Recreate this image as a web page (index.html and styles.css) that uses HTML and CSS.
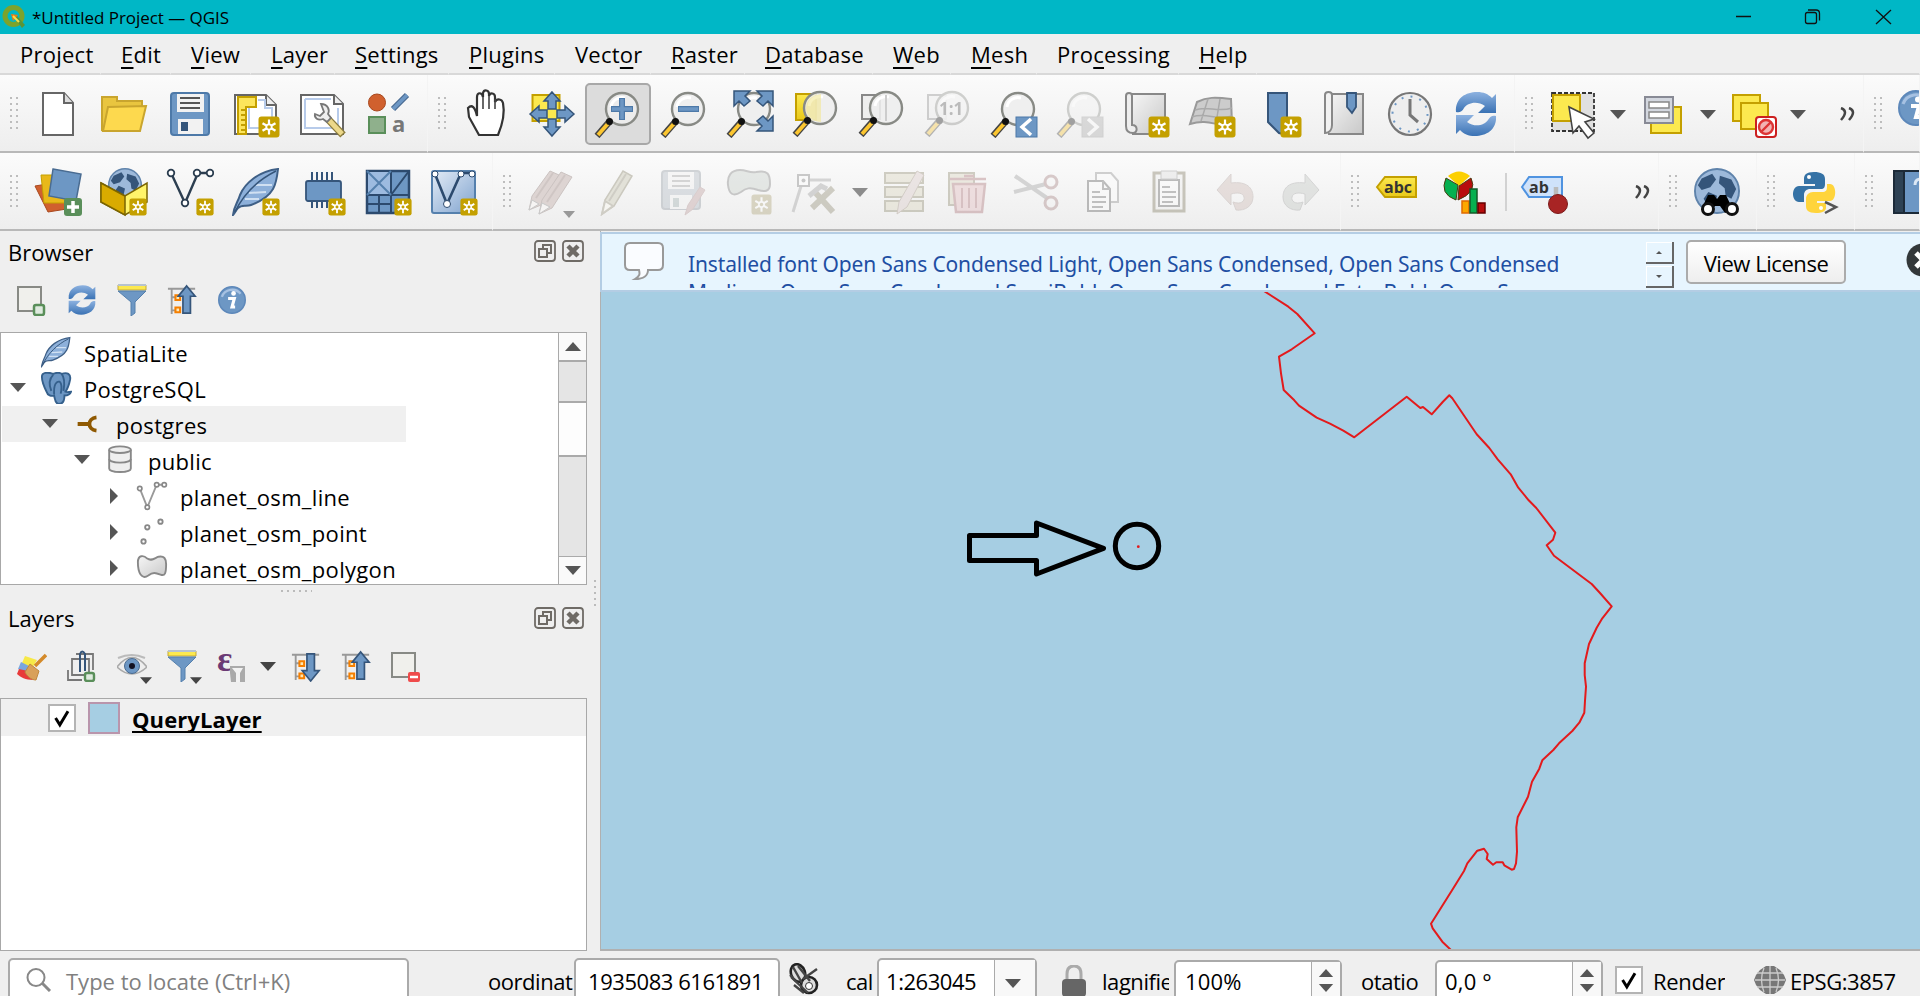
FILE: index.html
```html
<!DOCTYPE html>
<html lang="en">
<head>
<meta charset="utf-8">
<title>*Untitled Project — QGIS</title>
<link rel="stylesheet" href="styles.css">
</head>
<body>
<svg class="defs" width="0" height="0">
<defs>
<linearGradient id="gold" x1="0" y1="0" x2="0" y2="1"><stop offset="0" stop-color="#fce94f"/><stop offset="1" stop-color="#e8c81a"/></linearGradient>
<linearGradient id="sky" x1="0" y1="0" x2="1" y2="1"><stop offset="0" stop-color="#e4ecf6"/><stop offset="1" stop-color="#7fa3cf"/></linearGradient>
<linearGradient id="grey" x1="0" y1="0" x2="1" y2="1"><stop offset="0" stop-color="#f6f6f6"/><stop offset="1" stop-color="#c8c8c8"/></linearGradient>
<linearGradient id="ref" x1="0" y1="0" x2="0" y2="1"><stop offset="0" stop-color="#8db2e0"/><stop offset="1" stop-color="#3a72b4"/></linearGradient>
<symbol id="star" viewBox="0 0 22 22"><rect x=".5" y=".5" width="21" height="21" rx="3" fill="#c4a000"/><path d="M11 3.500v15M4.500 7.200l13 7.600M17.500 7.200l-13 7.600" stroke="#fff" stroke-width="2.200"/><circle cx="11" cy="11" r="3.600" fill="#fff"/><circle cx="11" cy="11" r="1.800" fill="#c4a000"/></symbol>
<symbol id="lens" viewBox="0 0 48 48"><path d="M16 31L3 46" stroke="#444" stroke-width="6.500"/><path d="M14.500 33L4 45" stroke="#fcc630" stroke-width="3.800"/><circle cx="28" cy="19" r="16" fill="#eee" fill-opacity=".88" stroke="#888a85" stroke-width="2.400"/><path d="M17 17a11 11 0 0 1 14-9" fill="none" stroke="#fff" stroke-width="3"/><circle cx="15.500" cy="31.500" r="3.500" fill="#111"/></symbol>
<symbol id="refresh" viewBox="0 0 48 48"><path d="M4 22C3 8 14 2 25 2c7 0 11 2 15 6l4-4v19H26l7-7c-8-6-18-3-21 2-2 4-5 5-8 4z" fill="url(#ref)"/><path d="M44 26c1 14-10 20-21 20-7 0-11-2-15-6l-4 4V25h18l-7 7c8 6 18 3 21-2 2-4 5-5 8-4z" fill="url(#ref)"/></symbol>
<symbol id="feather" viewBox="0 0 48 48"><path d="M1 47c1-9 5-13 7-20C13 15 27 3 46 1c-1 9-2 15-5 20-4 7-14 13-22 16-5 2-9-1-13 3-2 2-3 5-5 7z" fill="#8db0da" stroke="#3e5f86" stroke-width="2"/><path d="M17 25l17-1M24 17l16 0M13 31l14 0" fill="none" stroke="#d0e0f2" stroke-width="2"/><path d="M3 44C12 25 26 12 44 3" fill="none" stroke="#35557a" stroke-width="1.500"/></symbol>
<symbol id="vline" viewBox="0 0 48 48"><path d="M6 8l13 28L32 6h11" fill="none" stroke="currentColor" stroke-width="2.400"/><g fill="#fff" stroke="currentColor" stroke-width="1.800"><circle cx="5" cy="6" r="3.300"/><circle cx="19" cy="36" r="3.300"/><circle cx="31" cy="6" r="3.300"/><circle cx="44" cy="6" r="3.300"/></g></symbol>
<symbol id="pencil" viewBox="0 0 48 48"><path d="M9 46l3-14L30 3l9 5-18 30z" fill="#e2e1d8" stroke="#cbc9bf" stroke-width="1.500"/><path d="M16 33L33 6M9 46l3-13 8 5z" fill="#f6f5f1" stroke="#cfcdc5" stroke-width="2"/></symbol>
<symbol id="funnel" viewBox="0 0 30 32"><path d="M1 1h28v5H1z" fill="#fce94f" stroke="#c4a93a" stroke-width="1"/><path d="M1 1h28" stroke="#b7c3cf" stroke-width="2"/><path d="M1 7h28L18 18v11l-4 3V18z" fill="#6d97c4" stroke="#5580ad"/></symbol>
<symbol id="info" viewBox="0 0 36 36"><circle cx="18" cy="18" r="17" fill="#6d97c4" stroke="#5d88ba" stroke-width="2"/><path d="M5 14a14 14 0 0 1 24-4" fill="none" stroke="#a6c1e2" stroke-width="3"/><circle cx="20" cy="9.500" r="3" fill="#fff"/><path d="M13 16h8l-3 11h4" fill="none" stroke="#fff" stroke-width="4"/></symbol>
<symbol id="treebase" viewBox="0 0 32 34"><path d="M1 5h29M5 5v27M5 14h6M5 28h6" fill="none" stroke="#999" stroke-width="2"/><path d="M9 12h5v5H9zM9 25h5v5H9z" fill="#fce9b8" stroke="#f57f00" stroke-width="2.200"/></symbol>
<symbol id="up" viewBox="0 0 32 34"><use href="#treebase"/><path d="M21 2l9 11h-5v18h-8V13h-5z" fill="#6d97c4" stroke="#35557a" stroke-width="1.800"/></symbol>
<symbol id="down" viewBox="0 0 32 34"><use href="#treebase"/><path d="M21 33l9-11h-5V4h-8v18h-5z" fill="#6d97c4" stroke="#35557a" stroke-width="1.800"/></symbol>
<symbol id="float" viewBox="0 0 22 22"><rect x="1" y="1" width="20" height="20" rx="3" fill="none" stroke="#6f6b66" stroke-width="1.800"/><path d="M5 9h8v8H5zM9 9V5h8v8h-4" fill="none" stroke="#6f6b66" stroke-width="2"/></symbol>
<symbol id="close" viewBox="0 0 22 22"><rect x="1" y="1" width="20" height="20" rx="3" fill="none" stroke="#6f6b66" stroke-width="1.800"/><path d="M6 6l10 10M16 6L6 16" stroke="#6f6b66" stroke-width="4.500"/></symbol>
<symbol id="caret" viewBox="0 0 16 9"><path d="M0 0h16L8 9z" fill="currentColor"/></symbol>
<symbol id="globe" viewBox="0 0 48 48"><circle cx="24" cy="24" r="23" fill="#9db9da" stroke="#5f83ab" stroke-width="2"/><path d="M8 11l11-5 4 6-6 8-9 3-4-5zM27 8l12 4 5 10-5 10-6-3-1-8-6-5zM15 25l9 4-2 9-6 4-6-10z" fill="#35557a"/></symbol>
</defs>
</svg>
<div class="window">
  <header class="titlebar">
    <svg class="applogo" viewBox="0 0 24 24"><circle cx="11.500" cy="11" r="8.500" fill="none" stroke="#7ca32c" stroke-width="5"/><path d="M12 12l3-1 8 9-3 3z" fill="#5a9437"/><path d="M9 9l7 1-5 6z" fill="#ee7913"/><path d="M11 11l6 6" stroke="#f6e04b" stroke-width="2"/></svg>
    <span class="apptitle">*Untitled Project — QGIS</span>
    <svg class="winbtns" width="200" height="34" viewBox="1720 0 200 34" fill="none" stroke="#111" stroke-width="1.300"><path d="M1736 16.500h15M1876 10l15 14M1891 10l-15 14"/><rect x="1805.500" y="12.500" width="11" height="11" rx="2"/><path d="M1808 10h8q3.500 0 3.500 3.500v7"/></svg>
  </header>
  <nav class="menubar">
    <span>Project</span><span><u>E</u>dit</span><span><u>V</u>iew</span><span><u>L</u>ayer</span><span><u>S</u>ettings</span><span><u>P</u>lugins</span><span>Vect<u>o</u>r</span><span><u>R</u>aster</span><span><u>D</u>atabase</span><span><u>W</u>eb</span><span><u>M</u>esh</span><span>Pro<u>c</u>essing</span><span><u>H</u>elp</span><span></span>
  </nav>
  <div class="toolbars">
    <div class="row">
      <section class="group g1a"><i class="grip"></i>
        <b class="tool"><svg class="ic"><path d="M9 3h21l9 10v32H9z" fill="#fff" stroke="#666" stroke-width="2"/><path d="M30 3v10h9" fill="#ddd" stroke="#666" stroke-width="2"/></svg></b>
        <b class="tool"><svg class="ic"><path d="M2 41V7h15v4h25v10" fill="#e9c53f" stroke="#c9a52e" stroke-width="2"/><path d="M3 41L8 17l38-1-6 25z" fill="#fdd94e" stroke="#c9a52e" stroke-width="2"/></svg></b>
        <b class="tool"><svg class="ic"><rect x="5" y="3" width="38" height="42" rx="3" fill="#6d97c4" stroke="#4d79a8" stroke-width="2"/><path d="M11 4h27v18H11zM12 29h25v15H12z" fill="#f2f2f2"/><path d="M14 8h20M14 13h20M14 18h20" stroke="#555" stroke-width="2"/><path d="M15 32h7v9h-7z" fill="#35557a"/></svg></b>
        <b class="tool"><svg class="ic"><path d="M3 5h31l10 10v29H3z" fill="#fff" stroke="#666" stroke-width="2"/><path d="M34 5v10h10" fill="#eee" stroke="#666" stroke-width="2"/><path d="M26 10h7v8h7v20H17V18" fill="none" stroke="#b7cbea" stroke-width="2"/><path d="M6 7h18v10H14v27H6z" fill="#fce55c" stroke="#c4a000" stroke-width="2"/><path d="M9 20h6M9 25h6M9 30h6M9 35h6M9 40h6" stroke="#c4a000" stroke-width="2"/><use href="#star" x="26" y="26" width="22" height="22"/></svg></b>
        <b class="tool"><svg class="ic"><path d="M3 5h33l9 9v30H3z" fill="#fff" stroke="#666" stroke-width="2"/><path d="M36 5v9h9" fill="#eee" stroke="#666" stroke-width="2"/><path d="M7 9h26M7 9v29h33V18" fill="none" stroke="#b7cbea" stroke-width="2"/><path d="M29 28L45 45" stroke="#8a7a3a" stroke-width="7.500"/><path d="M29 28L44 44" stroke="#ecd88a" stroke-width="5"/><path d="M17 24l5 2 4-4-3-8c7 0 9 6 7 10l3 4-4 4-4-3c-5 2-9-1-8-5z" fill="#eee" stroke="#777" stroke-width="1.800"/></svg></b>
        <b class="tool"><svg class="ic"><circle cx="13" cy="12.500" r="8.500" fill="#d0602e" stroke="#a8481e"/><path d="M29 19L43 5" stroke="#4a6c92" stroke-width="6"/><path d="M29 19L43 5" stroke="#6d97c4" stroke-width="3.500"/><rect x="5" y="27" width="16" height="16" fill="#8fb08c" stroke="#5a8f5a" stroke-width="2"/><text x="28" y="42" class="glyph-a">a</text></svg></b>
      </section>
      <section class="group g1b"><i class="grip"></i>
        <b class="tool"><svg class="ic"><path d="M16 45L6 27 5 18c4-4 7-1 9 8V7c0-5 5-5 6 0V3c1-4 6-3 6 1v2c1-4 6-3 6 1v5c2-4 7-3 8 1 2 10 0 20-5 32z" fill="#fff" stroke="#333" stroke-width="2.200" transform="translate(1 0)"/><path d="M21 7v12M27 6v13M33 9v10" stroke="#444" stroke-width="1.600"/></svg></b>
        <b class="tool"><svg class="ic"><rect x="4.500" y="5" width="27" height="26" fill="#fce94f" stroke="#c4a000" stroke-width="2"/><path d="M24 2l8 9h-4v8h-8v-8h-4zM24 46l8-9h-4v-8h-8v8h-4zM2 24l9-8v4h8v8h-8v4zM46 24l-9-8v4h-8v8h8v4z" fill="#6d97c4" stroke="#35557a" stroke-width="1.500"/></svg></b>
        <b class="tool on"><svg class="ic"><use href="#lens"/><path d="M28 8v22M17 19h22" stroke="#4d79a8" stroke-width="6"/><path d="M28 9v20M18 19h20" stroke="#6d97c4" stroke-width="3.500"/></svg></b>
        <b class="tool"><svg class="ic"><use href="#lens"/><path d="M18 19h21" stroke="#4d79a8" stroke-width="6"/><path d="M19 19h19" stroke="#6d97c4" stroke-width="3.500"/></svg></b>
        <b class="tool"><svg class="ic"><use href="#lens"/><path d="M8 1h16l-5 5 5 5-6 5-5-5-5 5zM47 1H31l5 5-5 5 6 5 5-5 5 5zM47 41H31l5-5-5-5 6-5 5 5 5-5z" fill="#6d97c4" stroke="#35557a" stroke-width="1.500"/></svg></b>
        <b class="tool"><svg class="ic"><rect x="4" y="4" width="20" height="26" fill="url(#gold)" stroke="#c4a000" stroke-width="2"/><use href="#lens" y="-1"/><path d="M29 4v28a15 15 0 0 1-15-14Q15 6 29 4z" fill="#f3e58a" opacity=".55"/></svg></b>
        <b class="tool"><svg class="ic"><rect x="4" y="5" width="18" height="24" fill="#eee" stroke="#888" stroke-width="2"/><use href="#lens" y="-1"/><path d="M28 5v26" stroke="#ccc" stroke-width="2"/></svg></b>
        <b class="tool off"><svg class="ic"><rect x="4" y="5" width="18" height="24" fill="#eee" stroke="#888" stroke-width="2"/><use href="#lens" y="-1"/><text x="15" y="25" class="glyph-11">1:1</text></svg></b>
        <b class="tool"><svg class="ic"><use href="#lens"/><rect x="26" y="27" width="21" height="20" fill="#6d97c4" stroke="#4d79a8"/><path d="M41 29l-9 8 9 8" fill="none" stroke="#fff" stroke-width="3.500"/></svg></b>
        <b class="tool off"><svg class="ic"><use href="#lens"/><rect x="26" y="27" width="21" height="20" fill="#aaa" stroke="#999"/><path d="M32 29l9 8-9 8" fill="none" stroke="#fff" stroke-width="3.500"/></svg></b>
        <b class="tool"><svg class="ic"><path d="M9 4h34v40H10" fill="url(#grey)" stroke="#888" stroke-width="2"/><path d="M4 6c0-4 6-4 6 0v29c6 0 6 8 1 8-5 0-7-2-7-7z" fill="#eee" stroke="#888" stroke-width="2"/><use href="#star" x="26" y="26" width="22" height="22"/></svg></b>
        <b class="tool"><svg class="ic"><path d="M9 12c10-5 18-5 34-3l1 25c-14 4-22-6-42 0z" fill="#ccc" stroke="#999" stroke-width="2"/><path d="M7 20c12-5 22 3 37-2M4 27c14-5 25 4 40-1M20 9l-7 22M32 9l-4 24" stroke="#aaa" stroke-width="1.500" fill="none"/><use href="#star" x="26" y="26" width="22" height="22"/></svg></b>
        <b class="tool"><svg class="ic"><path d="M14 3h19v42L25 43 14 32z" fill="#6d97c4" stroke="#35557a" stroke-width="2"/><use href="#star" x="26" y="26" width="22" height="22"/></svg></b>
        <b class="tool"><svg class="ic"><path d="M8 4h35v40H8" fill="url(#grey)" stroke="#888" stroke-width="2"/><path d="M5 5c0-4 7-4 7 0v30c0 4-2 8-7 8z" fill="#f2f2f2" stroke="#888" stroke-width="2"/><path d="M27 3h9v14l-4 6-5-6z" fill="#6d97c4" stroke="#35557a" stroke-width="1.800"/></svg></b>
        <b class="tool"><svg class="ic"><circle cx="24" cy="24" r="21" fill="#eee" stroke="#777" stroke-width="2.200"/><circle cx="24" cy="24" r="17.500" fill="none" stroke="#6d97c4" stroke-width="2" stroke-dasharray="2 7.160"/><path d="M24 9v16l8 7" fill="none" stroke="#777" stroke-width="3"/></svg></b>
        <b class="tool"><svg class="ic"><use href="#refresh"/></svg></b>
      </section>
      <section class="group g1c"><i class="grip"></i>
        <b class="tool"><svg class="ic"><rect x="3" y="3" width="42" height="38" fill="#e0e0e0" stroke="#333" stroke-width="1.800" stroke-dasharray="4 2"/><rect x="4" y="5" width="27" height="26" fill="#fce94f" stroke="#c4a000" stroke-width="2"/><path d="M20 17l4 26 6-7 9 12 6-5-9-11 9-3z" fill="#fff" stroke="#444" stroke-width="1.600"/></svg></b><b class="drop"><svg><use href="#caret"/></svg></b>
        <b class="tool"><svg class="ic"><rect x="12" y="17" width="30" height="26" fill="#fce94f" stroke="#c4a000" stroke-width="2"/><rect x="6" y="7" width="28" height="26" fill="#d3d7df" stroke="#888a95" stroke-width="2"/><path d="M10 12h20v6H10zM10 22h20v6H10z" fill="#fff" stroke="#888" stroke-width="1.500"/></svg></b><b class="drop"><svg><use href="#caret"/></svg></b>
        <b class="tool"><svg class="ic"><g fill="#fce94f" stroke="#c4a000" stroke-width="2"><rect x="4" y="5" width="27" height="26"/><rect x="12" y="13" width="27" height="26"/></g><rect x="27" y="27" width="20" height="20" rx="3" fill="#fff" stroke="#cc2020" stroke-width="2"/><circle cx="37" cy="37" r="7" fill="#f2b3b3" stroke="#dd3434" stroke-width="2.400"/><path d="M32 42l10-10" stroke="#dd3434" stroke-width="2.400"/></svg></b><b class="drop"><svg><use href="#caret"/></svg></b>
        <svg class="more" viewBox="0 0 16 14"><path d="M1 1q8 3 0 12M9 1q8 3 0 12"/></svg>
      </section>
      <section class="group g1d"><i class="grip"></i><svg class="infobig"><use href="#info"/></svg></section>
    </div>
    <div class="row row2">
      <section class="group g2a"><i class="grip"></i>
        <b class="tool"><svg class="ic"><path d="M1 18l30-5 8 27-25 4z" fill="#d0602e" stroke="#a8481e"/><path d="M7 7l27 0 1 28-25 0z" fill="#e8b81a" stroke="#c4a000"/><path d="M19 1l28 5-5 27-27-5z" fill="#6d97c4" stroke="#4a6c92" stroke-width="1.500"/><rect x="30" y="30" width="18" height="18" rx="3" fill="#5a8f5a"/><path d="M39 33v12M33 39h12" stroke="#fff" stroke-width="3.500"/></svg></b>
        <b class="tool"><svg class="ic"><use href="#globe" x="8" y="0" width="34" height="34"/><path d="M1 15l24 13 22-13v19L25 47 1 34z" fill="#fff46a" stroke="#7a6400" stroke-width="1.500"/><path d="M1 15l24 13v19L1 34z" fill="#d9ab00" stroke="#7a6400" stroke-width="1.500"/><use href="#star" x="29" y="30" width="18" height="18"/></svg></b>
        <b class="tool"><svg class="ic vdark"><use href="#vline" y="-1"/><use href="#star" x="30" y="30" width="18" height="18"/></svg></b>
        <b class="tool"><svg class="ic"><use href="#feather"/><use href="#star" x="30" y="30" width="18" height="18"/></svg></b>
        <b class="tool"><svg class="ic"><path d="M14 4v36M19 4v36M24 4v36M29 4v36M34 4v36" stroke="#35557a" stroke-width="2"/><rect x="8" y="13" width="35" height="20" rx="2" fill="#6d97c4" stroke="#35557a" stroke-width="1.800"/><use href="#star" x="30" y="30" width="18" height="18"/></svg></b>
        <b class="tool"><svg class="ic"><rect x="3" y="3" width="42" height="42" fill="#6d97c4" stroke="#2c4a6e" stroke-width="2.500"/><path d="M4 4h22v22H4z" fill="#9dbbe0"/><path d="M3 27h42M27 3v24M27 27L45 3M15 27v18M27 27v18M3 36h24" fill="none" stroke="#2c4a6e" stroke-width="2"/><path d="M3 3l24 24M27 3L3 27" stroke="#5580ad" stroke-width="2"/><use href="#star" x="30" y="30" width="18" height="18"/></svg></b>
        <b class="tool"><svg class="ic vdark"><rect x="2" y="3" width="43" height="42" rx="2" fill="url(#sky)" stroke="#5580ad" stroke-width="2"/><path d="M5 6l12 30L31 5h13" fill="none" stroke="#2c4a6e" stroke-width="2.600"/><circle cx="5" cy="6" r="3" fill="#fff" stroke="#2c4a6e"/><circle cx="17" cy="36" r="3.500" fill="#fff" stroke="#2c4a6e"/><circle cx="31" cy="6" r="3" fill="#fff" stroke="#2c4a6e"/><circle cx="42" cy="6" r="3" fill="#fff" stroke="#2c4a6e"/><use href="#star" x="30" y="30" width="18" height="18"/></svg></b>
      </section>
      <section class="group g2b"><i class="grip"></i>
        <b class="tool"><svg class="ic"><g fill="#ddd4d2" stroke="#cbc3c1"><path d="M2 42l3-14L23 3l9 4-18 30z"/><path d="M12 46l3-14L34 4l11 5-20 31z"/></g><path d="M2 42l3-10 7 4zM12 46l3-11 8 4z" fill="#f6f4f3" stroke="#c8c8c8"/><path d="M9 30L26 5M20 34L38 7" stroke="#cfc6c4" stroke-width="2"/><path d="M36 43h12l-6 7z" fill="#999"/></svg></b>
        <b class="tool"><svg class="ic"><use href="#pencil"/></svg></b>
        <b class="tool off"><svg class="ic"><rect x="3" y="3" width="38" height="38" rx="3" fill="#aab4be" stroke="#8a939c" stroke-width="2"/><path d="M9 4h26v17H9zM11 27h22v14H11z" fill="#f2f2f2"/><path d="M13 8h18M13 13h18M13 18h18" stroke="#999" stroke-width="2"/><path d="M14 30h6v9h-6z" fill="#9aa"/><path d="M26 47l3-10 12-18 5 3-12 19z" fill="#b99" stroke="#a88"/></svg></b>
        <b class="tool off"><svg class="ic"><path d="M3 17C2 8 6 2 15 2c7 0 9 3 16 2 12-2 14 2 14 12 0 8-6 8-12 6-8-3-12-2-17 2C8 29 4 26 3 17z" fill="#c4ccc6" stroke="#777" stroke-width="2"/><g class="fade"><use href="#star" x="26" y="26" width="21" height="21"/></g></svg></b>
        <b class="tool off"><svg class="ic"><path d="M11 15L2 44M18 12h22" stroke="#999" stroke-width="3"/><rect x="7" y="7" width="11" height="11" fill="#fff" stroke="#777" stroke-width="2"/><circle cx="12.500" cy="12.500" r="2" fill="#777"/><path d="M21 40l21-20M22 22l20 22" stroke="#8a856c" stroke-width="6"/><path d="M18 28l12-10 6 3" fill="none" stroke="#999" stroke-width="5"/></svg></b><b class="drop faint"><svg><use href="#caret"/></svg></b>
        <b class="tool off"><svg class="ic"><path d="M4 5h38v10H4zM4 19h38v10H4zM4 33h38v10H4z" fill="#d7d2b8" stroke="#888366" stroke-width="2"/><path d="M16 46l2-12L36 3l7 4-17 32z" fill="#d6c5c2" stroke="#987"/></svg></b>
        <b class="tool off"><svg class="ic"><path d="M2 5h25v32H2z" fill="#d7d2b8" stroke="#888366" stroke-width="2"/><path d="M6 16h32l-3 28H9zM3 11h36M17 8h10" fill="#e0b5b8" stroke="#a66a6e" stroke-width="2.500"/><path d="M15 20v20M22 20v20M29 20v20" stroke="#a66a6e" stroke-width="2"/></svg></b>
        <b class="tool off"><svg class="ic"><path d="M2 8l32 22M1 24l32-8" stroke="#999" stroke-width="4"/><circle cx="38" cy="14" r="6" fill="none" stroke="#a07a7a" stroke-width="3"/><circle cx="38" cy="35" r="6" fill="none" stroke="#a07a7a" stroke-width="3"/></svg></b>
        <b class="tool off"><svg class="ic"><path d="M17 5h15l7 8v21H17z" fill="#fff" stroke="#888" stroke-width="2"/><path d="M9 13h15l7 8v22H9z" fill="#fff" stroke="#555" stroke-width="2"/><path d="M24 13v8h7M13 24h8M13 29h14M13 34h14M13 39h11" fill="none" stroke="#666" stroke-width="2"/></svg></b>
        <b class="tool off"><svg class="ic"><path d="M9 5h30v38H9z" fill="#eee" stroke="#777055" stroke-width="3"/><path d="M14 12h20v26H14z" fill="#fff" stroke="#555" stroke-width="2"/><path d="M16 3h16v8H16z" fill="#ddd" stroke="#888"/><path d="M17 19h8M17 24h14M17 29h14M17 34h11" stroke="#666" stroke-width="2"/></svg></b>
        <b class="tool off"><svg class="ic"><path d="M6 22L20 6v9c16-2 22 5 22 14 0 9-8 14-17 13l-3-8c8 3 12-1 11-5-1-4-6-5-13-3v11z" fill="#c9b4ae" stroke="#a99a96"/></svg></b>
        <b class="tool off"><svg class="ic"><path d="M42 22L28 6v9C12 13 6 20 6 29c0 9 8 14 17 13l3-8c-8 3-12-1-11-5 1-4 6-5 13-3v11z" fill="#bdc2bd" stroke="#999"/></svg></b>
      </section>
      <section class="group g2c"><i class="grip"></i>
        <b class="tool"><svg class="ic"><path d="M2 19L10 9h31v20H10z" fill="url(#gold)" stroke="#c4a000" stroke-width="2"/><text x="9" y="25" class="glyph-abc">abc</text></svg></b>
        <b class="tool"><svg class="ic"><path d="M18 18L7 8q11-9 22 0z" fill="#fcd000"/><path d="M17 17L5 10q-7 16 10 22z" fill="#06b050" stroke="#4a3a10"/><path d="M18 18L30 10q7 14-13 22z" fill="#b80d0d" stroke="#4a3a10"/><rect x="21" y="33" width="7" height="12" fill="#fca800" stroke="#e06a00" stroke-width="1.500"/><rect x="29" y="21" width="7" height="24" fill="#06b050" stroke="#145a28" stroke-width="1.500"/><rect x="37" y="35" width="7" height="10" fill="#b80d0d" stroke="#600" stroke-width="1.500"/></svg></b>
        <i class="sep"></i>
        <b class="tool ablabel"><svg class="ic"><path d="M2 19L9 9h33v20H9z" fill="#cfe2fa" stroke="#4f93e0" stroke-width="2"/><text x="9" y="25" class="glyph-ab">ab</text><path d="M36 19v12" stroke="#bbb" stroke-width="4.500"/><circle cx="38" cy="36" r="9.500" fill="#a82424" stroke="#7c1a1a"/></svg></b>
        <svg class="more" viewBox="0 0 16 14"><path d="M1 1q8 3 0 12M9 1q8 3 0 12"/></svg>
      </section>
      <section class="group g2d"><i class="grip"></i><b class="tool"><svg class="ic"><use href="#globe" x="1" y="0" width="46" height="46"/><path d="M8 42l7-15h6l3 4 3-4h6l7 15-8 3-5-7h-5l-5 7z" fill="#000"/><circle cx="15" cy="41" r="5.500" fill="#fff" stroke="#111" stroke-width="3"/><circle cx="39" cy="41" r="5.500" fill="#fff" stroke="#111" stroke-width="3"/></svg></b></section>
      <section class="group g2e"><i class="grip"></i><b class="tool"><svg class="ic"><path d="M23 4c-8 0-10 3-10 7v5h11v2H8c-8 0-8 16 0 16h5v-7c0-4 3-6 6-6h11c3 0 4-2 4-5v-5c0-5-4-7-11-7z" fill="#3572a5"/><path d="M25 45c-8 0-10-3-10-7v-7c0-4 3-7 7-7h9c4 0 5-2 5-5v-3h3c7 0 7 17 0 17H26v2h9v5c0 3-4 5-10 5z" fill="#ffd43b"/><circle cx="18" cy="9" r="2" fill="#fff"/><circle cx="30" cy="40" r="2" fill="#fff"/><path d="M34 34l11 5-11 6" fill="none" stroke="#555" stroke-width="2.500"/></svg></b></section>
      <section class="group g2f"><i class="grip"></i><svg class="helpbook" viewBox="0 0 40 44"><rect x="1" y="1" width="38" height="42" fill="#6d97c4" stroke="#1c2a38" stroke-width="2"/><path d="M1 1h10v42H1z" fill="#2e4254" stroke="#1c2a38" stroke-width="2"/><path d="M22 15q0-6 6-6t6 6q0 5-6 7v5" fill="none" stroke="#dce8f5" stroke-width="3"/></svg></section>
    </div>
  </div>
  <main class="work">
    <aside class="docks">
      <section class="dock browser">
        <h2><span>Browser</span><svg><use href="#float"/></svg><svg><use href="#close"/></svg></h2>
        <div class="dockbar">
          <b><svg viewBox="0 0 30 32"><rect x="1" y="3" width="23" height="24" fill="#f0f0ec" stroke="#888a85" stroke-width="2"/><rect x="17" y="21" width="10" height="10" rx="2" fill="#dfeadf" stroke="#5a8f5a" stroke-width="2.500"/></svg></b>
          <b><svg viewBox="2 0 44 48"><use href="#refresh" width="48" height="48"/></svg></b>
          <b><svg><use href="#funnel"/></svg></b>
          <b><svg><use href="#up"/></svg></b>
          <b><svg><use href="#info" y="2" height="28"/></svg></b>
        </div>
        <div class="treebox">
          <ul class="tree">
            <li class="d1"><i></i><svg viewBox="0 0 32 34"><use href="#feather" width="32" height="34"/></svg><span>SpatiaLite</span></li>
            <li class="d1"><i class="open"></i><svg viewBox="0 0 32 34"><path d="M1 5c0-5 7-5 12-3 4-2 8-1 9 0 6-2 10 0 9 6-1 5-2 9-5 13 2 1 4 0 6 0-1 3-4 4-7 4 0 5-2 9-6 9s-4-5-5-9c-3 1-7 0-8-4C3 15 1 10 1 5z" fill="#6d97c4" stroke="#35608c" stroke-width="2"/><path d="M13 3c-5 5-4 12-2 17M22 2c4 5 3 12 2 18M14 24c0-5-1-10 3-13s6 3 4 12" fill="none" stroke="#35608c" stroke-width="2"/></svg><span>PostgreSQL</span></li>
            <li class="d2 sel"><i class="open"></i><svg viewBox="0 0 24 34"><path d="M1 17h12M21 10c-10 1-10 13 0 14" fill="none" stroke="#8f5902" stroke-width="4"/></svg><span>postgres</span></li>
            <li class="d3"><i class="open"></i><svg viewBox="0 0 26 34"><path d="M1.500 6v20c0 5 23 5 23 0V6" fill="#eee" stroke="#888" stroke-width="2"/><ellipse cx="13" cy="6" rx="11.500" ry="3.500" fill="#eee" stroke="#888" stroke-width="2"/><path d="M1.500 16c0 5 23 5 23 0" fill="none" stroke="#888" stroke-width="2"/></svg><span>public</span></li>
            <li class="d4"><i class="shut"></i><svg viewBox="0 0 32 34"><path d="M3 9l8 20L21 5h8" fill="none" stroke="#999" stroke-width="2"/><g fill="#fff" stroke="#888" stroke-width="1.800"><circle cx="3" cy="9" r="2.300"/><circle cx="11" cy="29" r="2.300"/><circle cx="21" cy="5" r="2.300"/><circle cx="29" cy="5" r="2.300"/></g></svg><span>planet_osm_line</span></li>
            <li class="d4"><i class="shut"></i><svg viewBox="0 0 32 34"><g fill="#fff" stroke="#888" stroke-width="2"><circle cx="25" cy="6" r="2.300"/><circle cx="11" cy="12" r="2.300"/><circle cx="7" cy="27" r="2.300"/></g></svg><span>planet_osm_point</span></li>
            <li class="d4"><i class="shut"></i><svg viewBox="0 0 32 34"><path d="M1 11c0-8 6-8 10-4 4 3 7 0 12-2 6-1 8 2 8 8 0 9-1 13-6 11-5-2-8-3-13 1C5 30 1 22 1 11z" fill="url(#grey)" stroke="#888" stroke-width="2"/></svg><span>planet_osm_polygon</span></li>
          </ul>
          <div class="scroll"><b class="sb"><svg class="flip"><use href="#caret"/></svg></b><b class="track t1"></b><b class="thumb"></b><b class="track t2"></b><b class="sb"><svg><use href="#caret"/></svg></b></div>
        </div>
      </section>
      <div class="hsplit"></div>
      <section class="dock layers">
        <h2><span>Layers</span><svg><use href="#float"/></svg><svg><use href="#close"/></svg></h2>
        <div class="dockbar">
          <b><svg viewBox="0 0 30 32"><path d="M8 6l12 4-6 10-9-7z" fill="#f7e948"/><path d="M4 12l8 4-3 7-8-4z" fill="#7aa6e0"/><path d="M2 19l9 2 5 9C9 30 3 27 0 24z" fill="#e83a3a"/><path d="M13 14l9 7-3 9c-5 0-9-4-11-8z" fill="#d9a05a" stroke="#c08840"/><path d="M18 16L29 5" stroke="#d48a2a" stroke-width="3.500"/></svg></b>
          <b><svg viewBox="0 0 30 32" fill="none" stroke="#777" stroke-width="1.800"><path d="M9 4h17v16M5 9h17v16H5zM1 20v10h14"/><path d="M13 22V4q2-5 5 0v17" stroke="#35557a" stroke-width="2"/><rect x="18" y="23" width="9" height="8" rx="2" fill="#dfeadf" stroke="#5a8f5a" stroke-width="2.400"/></svg></b>
          <b><svg viewBox="0 0 30 32"><path d="M0 17Q15-2 30 17 15 31 0 17z" fill="#eee" stroke="#aaa" stroke-width="1.600"/><path d="M1 8q14-6 27 0" fill="none" stroke="#bbb" stroke-width="2"/><circle cx="15" cy="16" r="7.500" fill="#6d97c4" stroke="#4a6c92"/><circle cx="15" cy="16" r="3" fill="#112"/></svg><svg class="mini"><use href="#caret"/></svg></b>
          <b><svg><use href="#funnel"/></svg><svg class="mini"><use href="#caret"/></svg></b>
          <b class="eps"><svg viewBox="0 0 30 32"><text x="0" y="21" class="glyph-eps">ε</text><path d="M13 16h15v16H14l-1-9z" fill="#aaa"/><path d="M15 18h11l-3 5v9h-4v-9z" fill="#f2f2f2"/></svg><svg class="epsdrop"><use href="#caret"/></svg></b>
          <b><svg><use href="#down"/></svg></b>
          <b><svg><use href="#up"/></svg></b>
          <b><svg viewBox="0 0 30 32"><rect x="1" y="3" width="23" height="24" fill="#f0f0ec" stroke="#888a85" stroke-width="2"/><rect x="17" y="22" width="12" height="10" rx="2" fill="#ef4b4b"/><path d="M19 27h8" stroke="#fff" stroke-width="2.500"/></svg></b>
        </div>
        <div class="layerbox"><div class="layer"><i class="check"><svg viewBox="0 0 28 28"><path d="M6.500 14l5 8L21 6" fill="none" stroke="#000" stroke-width="3.400"/></svg></i><i class="swatch"></i><strong>QueryLayer</strong></div></div>
      </section>
    </aside>
    <div class="vsplit"></div>
    <section class="canvas">
      <div class="msgbar">
        <svg class="bubble" viewBox="0 0 42 40"><path d="M7 2h28q5 0 5 5v17q0 5-5 5H25c0 5-4 9-13 9 5-3 5-5 4-9H7q-5 0-5-5V7q0-5 5-5z" fill="#fafcff" stroke="#999" stroke-width="2"/></svg>
        <p>Installed font Open Sans Condensed Light, Open Sans Condensed, Open Sans Condensed<br>Medium, Open Sans Condensed SemiBold, Open Sans Condensed ExtraBold, Open Sans</p>
        <div class="spin"><b><svg viewBox="0 0 6 3"><path d="M0 3L3 0l3 3z"/></svg></b><b><svg viewBox="0 0 6 3"><path d="M0 0h6L3 3z"/></svg></b></div>
        <button>View License</button>
        <svg class="msgclose" viewBox="0 0 34 34"><circle cx="17" cy="17" r="16.500" fill="#33383a"/><path d="M10 10l14 14M24 10L10 24" stroke="#fff" stroke-width="5"/></svg>
      </div>
      <svg class="map" viewBox="601 292 1319 657" fill="none">
        <path stroke="#e31a1c" stroke-width="2" stroke-linejoin="round" d="M1264 291L1288.300 306.700L1297.300 314L1314.700 333.300L1291.700 349.300L1279 356.700L1281 373.300L1283.700 390L1294.300 400.300L1299 405.700L1316.700 417.700L1330 423.700L1343.300 430.700L1354.300 437.300L1406.700 396.700L1420.300 408L1423 407L1431.700 414.300L1442.700 402L1449.300 395.300L1452.300 398.300L1476.700 434.300L1489.300 448L1497.700 459.300L1510.700 474.300L1518.300 487.700L1528.700 500.300L1536.300 508L1555.300 532.700L1553 539.700L1546.700 545.300L1554 555.700L1591.700 584L1600 593L1611.700 606.300L1602.300 618.300L1596.700 627.700L1589 644L1584.700 663.300L1584.700 675L1586 686.700L1585 700.700L1584.300 712.700L1579.300 722.700L1572.300 731L1559 743.300L1553.300 750L1542.300 760.300L1539.300 768.700L1532 781.700L1528 796.700L1517.700 817.300L1516.300 827.300L1517 851.700L1516 863.300L1514 869L1511.700 869.700L1504.300 865.300L1502.700 862.300L1496.300 862.300L1493 864.700L1486.700 859L1487.700 854L1484 848.700L1477.300 850.700L1467.300 863.300L1464 871L1453.300 888.300L1431 923.700L1432.700 928.300L1442.300 941.700L1452 951"/>
        <path stroke="#000" stroke-width="5" stroke-linejoin="round" d="M969.500 535.500h67V523l67 25.300-67 25.700v-13.500h-67z"/>
        <circle cx="1137" cy="546" r="21.700" stroke="#000" stroke-width="5"/>
        <circle cx="1138.300" cy="546.700" r="1.400" fill="#e31a1c"/>
      </svg>
    </section>
  </main>
  <footer class="status">
    <div class="locator"><svg viewBox="0 0 26 24"><circle cx="10" cy="9.500" r="8.500" fill="none" stroke="#888" stroke-width="2"/><path d="M16 15l8 8" stroke="#888" stroke-width="3"/></svg><span>Type to locate (Ctrl+K)</span></div>
    <span class="lab coord">oordinat</span>
    <div class="field f-coord"><span>1935083 6161891</span></div>
    <svg class="mouse" viewBox="0 0 32 32"><g fill="#ddd" stroke="#222" stroke-width="2.600"><ellipse cx="10" cy="10" rx="7" ry="9" transform="rotate(-20 10 10)"/><circle cx="21" cy="22" r="8"/></g><path d="M3 14l17 16M10 3l12 15M5 4l9 16M15 16l14-10M6 22l10 8M2 12l5 5" stroke="#444" stroke-width="2.400"/><circle cx="21" cy="23" r="3.500" fill="#fff" stroke="#333"/></svg>
    <span class="lab scale">cal</span>
    <div class="field f-scale"><span>1:263045</span><b><svg><use href="#caret"/></svg></b></div>
    <svg class="lock" viewBox="0 0 24 32"><path d="M5 16V9q0-8 7-8t7 8v7" fill="none" stroke="#aaa" stroke-width="3"/><rect x="0" y="14" width="24" height="18" rx="4" fill="#666"/></svg>
    <span class="lab mag">lagnifie</span>
    <div class="field f-mag"><span>100%</span><b><svg class="flip"><use href="#caret"/></svg><svg><use href="#caret"/></svg></b></div>
    <span class="lab rot">otatio</span>
    <div class="field f-rot"><span>0,0 °</span><b><svg class="flip"><use href="#caret"/></svg><svg><use href="#caret"/></svg></b></div>
    <i class="check"><svg viewBox="0 0 28 28"><path d="M6.500 14l5 8L21 6" fill="none" stroke="#000" stroke-width="3.400"/></svg></i>
    <span class="lab render">Render</span>
    <svg class="crs" viewBox="0 0 32 30" fill="none" stroke="#ccc" stroke-width="1.300"><path d="M12 1h8l6 4 4 5 2 5-2 5-4 5-6 4h-8l-6-4-4-5-2-5 2-5 4-5z" fill="#777" stroke="none"/><path d="M3 8h26M1 15h30M3 22h26M16 1v28M10 3q-5 12 0 24M22 3q5 12 0 24"/></svg>
    <span class="lab epsg">EPSG:3857</span>
  </footer>
</div>
</body>
</html>
```

FILE: styles.css
```css
* { box-sizing: border-box; }
body { margin: 0; font-family: "Open Sans", "Noto Sans", sans-serif; font-size: 22px; color: #000; background: #efefef; }
b, i { font-style: normal; font-weight: normal; display: block; }
svg { display: block; flex: none; }
.defs { position: absolute; }
.window { width: 1920px; height: 996px; overflow: hidden; display: flex; flex-direction: column; }

.titlebar { height: 34px; flex: none; background: #00b7c6; display: flex; align-items: center; padding-left: 2px; }
.applogo { width: 24px; height: 24px; }
.apptitle { font-size: 17px; margin-left: 6px; line-height: 34px; padding-top: 1px; letter-spacing: -.05px; white-space: nowrap; }
.winbtns { margin-left: auto; }

.menubar { height: 41px; flex: none; display: grid; grid-template-columns: 101px 70px 80px 84px 114px 106px 96px 94px 128px 78px 86px 142px 78px 1fr; }
.menubar span { padding-left: 20px; border-right: 1px solid #efefef; border-bottom: 2px solid #d8d8d8; height: 41px; line-height: 41px; letter-spacing: .25px; white-space: nowrap; }
.menubar u { text-decoration-thickness: 2px; text-underline-offset: 4px; text-decoration-skip-ink: none; }

.toolbars { flex: none; }
.row { display: flex; height: 78px; }
.group { display: flex; align-items: center; flex: none; height: 78px; background: linear-gradient(#fbfbfb, #eee); border-bottom: 2px solid #b8b8b8; border-right: 1px solid #f4f4f4; padding-left: 9px; padding-top: 2px; overflow: hidden; }
.grip { flex: none; width: 12px; height: 36px; margin-right: 4px; background: radial-gradient(circle at 2px 2px, #bdbdbd 1.200px, transparent 1.500px) 0 0 / 6px 6px; }
.tool { flex: none; width: 66px; height: 64px; display: flex; align-items: center; justify-content: center; border-radius: 5px; }
.ic { width: 48px; height: 48px; overflow: visible; }
.tool.on { background: #dcdcdc; border: 2px solid #a8a8a8; height: 62px; }
.off { opacity: .36; }
.fade { filter: grayscale(.7); }
.drop { width: 24px; flex: none; color: #555; display: flex; justify-content: center; }
.drop svg, .sb svg, .f-scale b svg, .epsdrop { width: 16px; height: 9px; }
.faint { color: #8c8c8c; }
.more { width: 16px; height: 14px; margin-left: auto; margin-right: 7px; fill: none; stroke: #444; stroke-width: 2.500; }
.g1a { width: 428px; } .g1b { width: 1087px; } .g1c { width: 349px; } .g1d { width: 56px; }
.g2a { width: 493px; } .g2b { width: 848px; } .g2c { width: 318px; } .g2d { width: 98px; } .g2e { width: 98px; } .g2f { width: 65px; }
.infobig { width: 36px; height: 36px; margin: 0 0 12px 9px; }
.helpbook { width: 40px; height: 44px; margin-left: 13px; }
.sep { width: 2px; height: 38px; background: #d2d2d2; margin: 0 0 0 7px; }
.ablabel { margin-left: 4px; }
.vdark { color: #2c3e50; }
.glyph-a { font: bold 22px "Open Sans", sans-serif; fill: #777; }
.glyph-11 { font: bold 17px "Open Sans", sans-serif; fill: #555; }
.glyph-abc, .glyph-ab { font: bold 16px "Open Sans", sans-serif; fill: #333; }
.glyph-eps { font: bold 36px "Liberation Serif", serif; fill: #6b3a75; }

.work { height: 720px; flex: none; display: flex; }
.docks { width: 587px; flex: none; display: flex; flex-direction: column; }
.dock h2 { font-size: 22px; font-weight: normal; margin: 0; display: flex; align-items: center; height: 44px; padding: 0 3px 0 8px; }
.dock h2 span { flex: 1; }
.dock h2 svg { width: 22px; height: 22px; margin-left: 6px; }
.browser h2 { margin-top: -1px; padding-bottom: 2px; }
.browser h2 span { padding-top: 2px; }
.dockbar { display: flex; height: 58px; align-items: center; padding-left: 17px; padding-bottom: 6px; }
.dockbar b { width: 50px; flex: none; display: flex; position: relative; color: #444; }
.dockbar b > svg { width: 30px; height: 32px; }
.dockbar b > svg.mini { position: absolute; left: 23px; top: 27px; width: 12px; height: 7px; }
.dockbar b.eps { width: 74px; }
.dockbar b > svg.epsdrop { width: 16px; height: 9px; margin: 12px 0 0 13px; }
.treebox { height: 253px; border: 1px solid #a8a8a8; background: #fff; display: flex; overflow: hidden; }
.tree { list-style: none; margin: 0; padding: 1px 0 0 1px; flex: 1; }
.tree li { height: 36px; display: flex; align-items: center; white-space: nowrap; }
.tree li i { width: 16px; height: 16px; margin-right: 14px; }
.tree i.open { clip-path: polygon(0 3px, 16px 3px, 8px 12px); background: #555; }
.tree i.shut { clip-path: polygon(4px 0, 12px 8px, 4px 16px); background: #555; }
.tree svg { width: 32px; height: 32px; margin-right: 12px; }
.tree span { padding-top: 2px; line-height: 32px; letter-spacing: .32px; }
.d1 { padding-left: 8px; } .d2 { padding-left: 40px; } .d3 { padding-left: 72px; } .d4 { padding-left: 104px; }
.sel { background: #f0f0f0; width: 404px; }
.scroll { width: 28px; border-left: 1px solid #aaa; display: flex; flex-direction: column; }
.sb { height: 28px; display: flex; align-items: center; justify-content: center; color: #555; background: #fafafa; border-top: 1px solid #aaa; }
.sb:first-child { border: 0; height: 27px; }
.flip { transform: scaleY(-1); }
.track { background: #e5e5e5; border-top: 2px solid #aaa; }
.t1 { height: 41px; } .t2 { flex: 1; }
.thumb { height: 54px; background: #fdfdfd; border-top: 2px solid #aaa; }
.hsplit { height: 13px; background: radial-gradient(circle at 2px 2px, #bbb 1.200px, transparent 1.500px) 280px 4px / 6px 6px repeat-x; width: 312px; background-clip: content-box; padding-left: 280px; }
.layers { flex: 1; display: flex; flex-direction: column; }
.layers h2 { height: 42px; padding-bottom: 3px; }
.layers .dockbar { height: 58px; padding-bottom: 6px; }
.layerbox { flex: 1; border: 1px solid #a8a8a8; background: #fff; }
.layer { background: #f0f0f0; height: 37px; display: flex; align-items: center; padding-left: 47px; }
.check { width: 28px; height: 28px; border: 2px solid #b4b4b4; background: #fff; flex: none; }
.check svg { width: 24px; height: 24px; }
.swatch { width: 32px; height: 32px; background: #a6cee3; border: 2px solid #b995ac; margin: 0 12px; }
.layer strong { font-size: 22px; text-decoration: underline; text-decoration-thickness: 2px; text-underline-offset: 3px; text-decoration-skip-ink: none; padding-top: 3px; letter-spacing: .1px; }
.vsplit { width: 13px; background: radial-gradient(circle at 2px 2px, #bbb 1.200px, transparent 1.500px) 0 0 / 6px 6px repeat-y; background-clip: content-box; background-origin: content-box; padding: 348px 0 342px 6px; }
.canvas { width: 1320px; display: flex; flex-direction: column; border-left: 1px solid #b0b0b0; border-bottom: 2px solid #b0b0b0; }
.msgbar { height: 60px; flex: none; background: #e7f5fe; border: 2px solid #b4cde4; border-right: 0; display: flex; margin: 1px 0 0 -1px; }
.bubble { width: 42px; height: 40px; margin: 7px 0 0 21px; }
.msgbar p { margin: 16px 0 0 23px; height: 38px; width: 958px; overflow: hidden; font-family: "Noto Sans", sans-serif; font-size: 21px; line-height: 28px; letter-spacing: -.14px; color: #1f4fa3; white-space: nowrap; }
.spin b { width: 28px; height: 22px; border: solid #666; border-width: 0 2px 2px 0; display: flex; align-items: center; justify-content: center; margin-bottom: 2px; box-shadow: inset 1px 1px #fff; }
.spin { padding-top: 8px; }
.spin svg { width: 6px; height: 3px; fill: #555; }
.msgbar button { flex: none; width: 160px; height: 44px; margin: 6px 0 0 12px; padding: 2px 0 0; font: 22px "Open Sans", sans-serif; letter-spacing: -.45px; color: #000; background: linear-gradient(#fff, #eee); border: 2px solid #ababab; border-radius: 5px; white-space: nowrap; }
.msgclose { width: 34px; height: 34px; margin: 9px -30px 0 60px; }
.map { width: 1319px; height: 657px; background: #a6cee3; flex: 1; }

.status { flex: 1; display: flex; position: relative; white-space: nowrap; letter-spacing: -.45px; }
.status > * { flex: none; }
.locator { width: 401px; margin-left: 8px; margin-top: 7px; height: 50px; border: 2px solid #aaa; border-radius: 5px; background: #fff; display: flex; padding: 7px 0 0 16px; color: #808080; letter-spacing: 0; }
.locator svg { width: 26px; height: 24px; margin-top: 1px; }
.locator span { margin-left: 14px; line-height: 28px; }
.lab { line-height: 30px; padding-top: 15px; overflow: hidden; }
.coord { margin-left: 79px; width: 86px; }
.field { margin-top: 7px; height: 50px; border: 2px solid #aaa; border-radius: 5px; background: #fff; display: flex; line-height: 30px; justify-content: space-between; }
.field span { padding-top: 6px; }
.field b { border-left: 1px solid #aaa; background: #f8f8f8; color: #555; }
.f-coord { width: 206px; padding-left: 12px; }
.mouse { width: 32px; height: 32px; margin: 12px 0 0 8px; }
.scale { margin-left: 26px; width: 31px; }
.f-scale { width: 160px; padding-left: 7px; }
.f-scale b { width: 41px; padding: 19px 0 0 10px; }
.lock { width: 24px; height: 32px; margin: 14px 0 0 25px; }
.mag { margin-left: 16px; width: 67px; }
.f-mag { width: 168px; margin-left: 5px; margin-top: 9px; padding-left: 9px; letter-spacing: .2px; }
.f-mag b, .f-rot b { width: 29px; padding: 7px 0 0 6px; }
.f-mag span, .f-rot span { padding-top: 4px; }
.f-mag b svg, .f-rot b svg { width: 16px; height: 8px; margin-bottom: 7px; }
.rot { margin-left: 19px; width: 58px; }
.f-rot { width: 168px; margin-left: 16px; margin-top: 9px; padding-left: 8px; letter-spacing: .2px; }
.status .check { margin: 15px 0 0 12px; }
.render { margin-left: 10px; width: 72px; letter-spacing: -.3px; }
.crs { width: 32px; height: 30px; margin: 14px 0 0 29px; }
.epsg { margin-left: 4px; }
```
